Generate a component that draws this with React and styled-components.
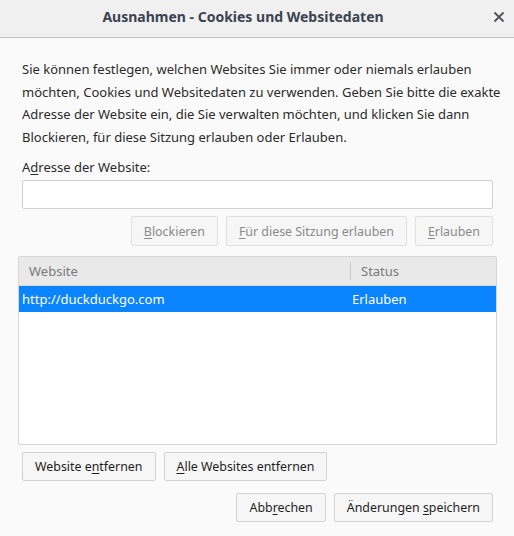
import React from "react";
import styled, { createGlobalStyle } from "styled-components";

const Global = createGlobalStyle`
  html, body { margin: 0; padding: 0; background: #fafafa; }
  body { font-family: "Noto Sans", "DejaVu Sans", sans-serif; font-size: 13px; color: #2b2b2b; }
  * { box-sizing: border-box; }
`;

const Dialog = styled.div`
  width: 514px;
  height: 536px;
  display: flex;
  flex-direction: column;
  background: #fafafa;
`;

const TitleBar = styled.div`
  height: 38px;
  flex: none;
  display: flex;
  align-items: center;
  justify-content: center;
  padding-right: 28px;
  background: #f0f0f0;
  border-bottom: 1px solid #c3c3c3;
  position: relative;
`;

const Title = styled.div`
  font-weight: 700;
  font-size: 14px;
  color: #3b4350;
  margin-top: -4px;
`;

const Close = styled.button`
  position: absolute;
  right: 4px;
  top: 6px;
  width: 22px;
  height: 22px;
  border: 0;
  background: transparent;
  padding: 0;
  display: flex;
  align-items: center;
  justify-content: center;
`;

const Body = styled.div`
  padding: 20px 21px 0 22px;
  display: flex;
  flex-direction: column;
`;

const Intro = styled.p`
  margin: 0;
  line-height: 22.5px;
  color: #2b2b2b;
  white-space: nowrap;
`;

const Label = styled.div`
  margin-top: 8px;
  line-height: 22px;
`;

const Input = styled.div`
  margin-top: 2px;
  height: 29px;
  background: #fff;
  border: 1px solid #cfcfcf;
  border-radius: 2px;
`;

const Row = styled.div`
  display: flex;
  gap: ${(p) => p.$gap || 8}px;
  justify-content: ${(p) => (p.$end ? "flex-end" : "flex-start")};
  margin-top: ${(p) => p.$top || 0}px;
`;

const Button = styled.button`
  height: ${(p) => (p.$h ? p.$h : 30)}px;
  padding: 0 12px;
  font-family: inherit;
  font-size: 12.4px;
  border-radius: 2px;
  background: #f6f6f6;
  border: 1px solid ${(p) => (p.disabled ? "#e0e0e0" : "#d3d3d3")};
  color: ${(p) => (p.disabled ? "#8a8a8a" : "#1e1e1e")};
`;

const Key = styled.span`
  text-decoration: underline;
  text-underline-offset: 2px;
`;

const Tree = styled.div`
  margin: 10px -4px 0 -4px;
  height: 189px;
  background: #fff;
  border: 1px solid #d6d6d6;
  border-radius: 2px;
  display: flex;
  flex-direction: column;
`;

const Header = styled.div`
  height: 29px;
  display: grid;
  grid-template-columns: 331px 1fr;
  align-items: center;
  background: #e9e9e9;
  border-bottom: 1px solid #d6d6d6;
  color: #7a7a7a;
`;

const HeadCell = styled.div`
  padding-left: 10px;
  border-left: ${(p) => (p.$sep ? "1px solid #c8c8c8" : "0")};
  line-height: 18px;
`;

const Item = styled.div`
  height: 26px;
  display: grid;
  grid-template-columns: 331px 1fr;
  align-items: center;
  background: ${(p) => (p.$selected ? "#0a84ff" : "transparent")};
  color: ${(p) => (p.$selected ? "#fff" : "#2b2b2b")};
`;

const Cell = styled.div`
  padding-left: ${(p) => p.$pad || 2}px;
`;

export default function App() {
  return (
    <Dialog>
      <Global />
      <TitleBar>
        <Title>Ausnahmen - Cookies und Websitedaten</Title>
        <Close aria-label="Schließen">
          <svg width="12" height="12" viewBox="0 0 12 12">
            <path d="M1.5 1.5 L10.5 10.5 M10.5 1.5 L1.5 10.5" stroke="#4a535e" strokeWidth="1.8" />
          </svg>
        </Close>
      </TitleBar>
      <Body>
        <Intro>
          Sie können festlegen, welchen Websites Sie immer oder niemals erlauben
          <br />
          möchten, Cookies und Websitedaten zu verwenden. Geben Sie bitte die exakte
          <br />
          Adresse der Website ein, die Sie verwalten möchten, und klicken Sie dann
          <br />
          Blockieren, für diese Sitzung erlauben oder Erlauben.
        </Intro>
        <Label>
          A<Key>d</Key>resse der Website:
        </Label>
        <Input />
        <Row $end $top={7}>
          <Button disabled>
            <Key>B</Key>lockieren
          </Button>
          <Button disabled>
            <Key>F</Key>ür diese Sitzung erlauben
          </Button>
          <Button disabled>
            <Key>E</Key>rlauben
          </Button>
        </Row>
        <Tree>
          <Header>
            <HeadCell>Website</HeadCell>
            <HeadCell $sep>Status</HeadCell>
          </Header>
          <Item $selected>
            <Cell $pad={3}>http://duckduckgo.com</Cell>
            <Cell $pad={2}>Erlauben</Cell>
          </Item>
        </Tree>
        <Row $top={7}>
          <Button $h={29}>
            Website e<Key>n</Key>tfernen
          </Button>
          <Button $h={29}>
            <Key>A</Key>lle Websites entfernen
          </Button>
        </Row>
        <Row $end $top={12}>
          <Button $h={29}>
            Abb<Key>r</Key>echen
          </Button>
          <Button $h={29}>
            Änderungen <Key>s</Key>peichern
          </Button>
        </Row>
      </Body>
    </Dialog>
  );
}
